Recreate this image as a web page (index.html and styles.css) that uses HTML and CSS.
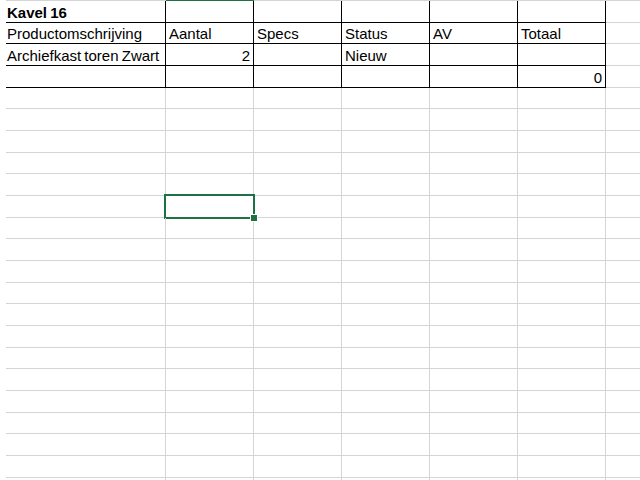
FILE: index.html
```html
<!DOCTYPE html>
<html lang="nl">
<head>
<meta charset="utf-8">
<title>Kavel 16</title>
<link rel="stylesheet" href="styles.css">
</head>
<body>
<div class="sheet">
  <div class="topline"><span class="tl-a"></span><span class="tl-b"></span><span class="tl-rest"></span></div>
  <div class="row h22 first">
    <div class="c bk bold">Kavel 16</div><div class="c bk"></div><div class="c bk"></div><div class="c bk"></div><div class="c bk"></div><div class="c bk"></div><div class="c bk"></div><div class="c"></div>
  </div>
  <div class="row h21">
    <div class="c bk">Productomschrijving</div><div class="c bk">Aantal</div><div class="c bk">Specs</div><div class="c bk">Status</div><div class="c bk">AV</div><div class="c bk">Totaal</div><div class="c"></div>
  </div>
  <div class="row h22">
    <div class="c bk">Archiefkast toren Zwart</div><div class="c bk num">2</div><div class="c bk"></div><div class="c bk">Nieuw</div><div class="c bk"></div><div class="c bk"></div><div class="c"></div>
  </div>
  <div class="row h22">
    <div class="c bk"></div><div class="c bk"></div><div class="c bk"></div><div class="c bk"></div><div class="c bk"></div><div class="c bk num">0</div><div class="c"></div>
  </div>
  <div class="row h21"><div class="c"></div><div class="c"></div><div class="c"></div><div class="c"></div><div class="c"></div><div class="c"></div><div class="c"></div></div>
  <div class="row h22"><div class="c"></div><div class="c"></div><div class="c"></div><div class="c"></div><div class="c"></div><div class="c"></div><div class="c"></div></div>
  <div class="row h22"><div class="c"></div><div class="c"></div><div class="c"></div><div class="c"></div><div class="c"></div><div class="c"></div><div class="c"></div></div>
  <div class="row h21"><div class="c"></div><div class="c"></div><div class="c"></div><div class="c"></div><div class="c"></div><div class="c"></div><div class="c"></div></div>
  <div class="row h22"><div class="c"></div><div class="c"></div><div class="c"></div><div class="c"></div><div class="c"></div><div class="c"></div><div class="c"></div></div>
  <div class="row h22"><div class="c"></div><div class="c sel"><span class="handle"></span></div><div class="c"></div><div class="c"></div><div class="c"></div><div class="c"></div><div class="c"></div></div>
  <div class="row h21"><div class="c"></div><div class="c"></div><div class="c"></div><div class="c"></div><div class="c"></div><div class="c"></div><div class="c"></div></div>
  <div class="row h22"><div class="c"></div><div class="c"></div><div class="c"></div><div class="c"></div><div class="c"></div><div class="c"></div><div class="c"></div></div>
  <div class="row h22"><div class="c"></div><div class="c"></div><div class="c"></div><div class="c"></div><div class="c"></div><div class="c"></div><div class="c"></div></div>
  <div class="row h21"><div class="c"></div><div class="c"></div><div class="c"></div><div class="c"></div><div class="c"></div><div class="c"></div><div class="c"></div></div>
  <div class="row h22"><div class="c"></div><div class="c"></div><div class="c"></div><div class="c"></div><div class="c"></div><div class="c"></div><div class="c"></div></div>
  <div class="row h22"><div class="c"></div><div class="c"></div><div class="c"></div><div class="c"></div><div class="c"></div><div class="c"></div><div class="c"></div></div>
  <div class="row h21"><div class="c"></div><div class="c"></div><div class="c"></div><div class="c"></div><div class="c"></div><div class="c"></div><div class="c"></div></div>
  <div class="row h22"><div class="c"></div><div class="c"></div><div class="c"></div><div class="c"></div><div class="c"></div><div class="c"></div><div class="c"></div></div>
  <div class="row h22"><div class="c"></div><div class="c"></div><div class="c"></div><div class="c"></div><div class="c"></div><div class="c"></div><div class="c"></div></div>
  <div class="row h21"><div class="c"></div><div class="c"></div><div class="c"></div><div class="c"></div><div class="c"></div><div class="c"></div><div class="c"></div></div>
  <div class="row h22"><div class="c"></div><div class="c"></div><div class="c"></div><div class="c"></div><div class="c"></div><div class="c"></div><div class="c"></div></div>
  <div class="row h22"><div class="c"></div><div class="c"></div><div class="c"></div><div class="c"></div><div class="c"></div><div class="c"></div><div class="c"></div></div>
  <div class="row h21"><div class="c"></div><div class="c"></div><div class="c"></div><div class="c"></div><div class="c"></div><div class="c"></div><div class="c"></div></div>
</div>
</body>
</html>
```
FILE: styles.css
```css
html, body {
  margin: 0;
  padding: 0;
  background: #ffffff;
  overflow: hidden;
}
body {
  width: 640px;
  height: 480px;
  font-family: "Liberation Sans", Arial, sans-serif;
  font-size: 15px;
  word-spacing: -1px;
  color: #000;
}
.sheet {
  padding-left: 6px;
  overflow: hidden;
  height: 480px;
}
.topline {
  display: grid;
  grid-template-columns: 160px 88px 1fr;
  height: 1px;
}
.tl-a, .tl-rest { background: #d4d4d4; }
.tl-b { background: #1e7145; }
.row {
  display: grid;
  grid-template-columns: 160px repeat(5, 88px) 88px 1fr;
}
.row.h21 { height: 21px; }
.row.h22 { height: 22px; }
.c {
  box-sizing: border-box;
  border-right: 1px solid #d4d4d4;
  border-bottom: 1px solid #d4d4d4;
  display: flex;
  align-items: flex-end;
  padding: 0 3px 0 3px;
  white-space: nowrap;
  line-height: 19px;
  position: relative;
}
.c:first-child { padding-left: 1px; }
.c:last-child { border-right: none; }
.c.bk {
  border-right-color: #000;
  border-bottom-color: #000;
}
.row.first .c.bk:nth-child(7) { border-right-color: #d4d4d4; border-bottom-color: #d4d4d4; }
.bold { font-weight: 700; }
.num { justify-content: flex-end; }
.sel::after {
  content: "";
  position: absolute;
  left: -2px;
  top: -2px;
  right: -2px;
  bottom: -2px;
  border: 2px solid #1e7145;
}
.handle {
  position: absolute;
  right: -5px;
  bottom: -5px;
  width: 6px;
  height: 6px;
  background: #1e7145;
  border: 1px solid #fff;
  z-index: 2;
}
```
